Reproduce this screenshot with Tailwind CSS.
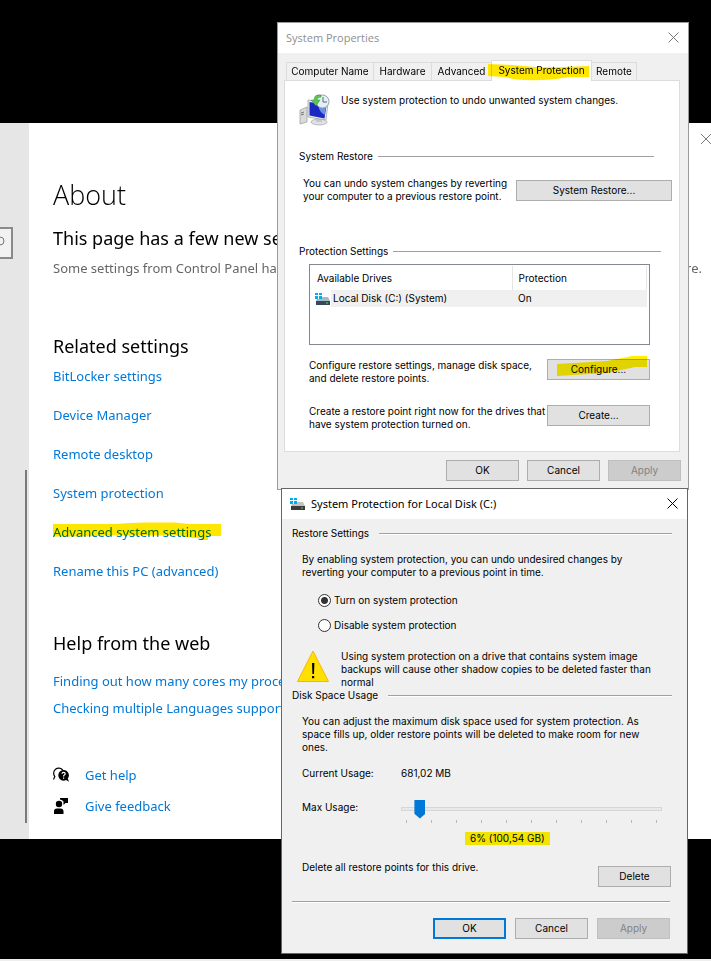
<!DOCTYPE html>
<html lang="en">
<head>
  <meta charset="UTF-8" />
  <meta name="viewport" content="width=device-width, initial-scale=1" />
  <title>System Protection</title>
  <script src="https://cdn.jsdelivr.net/npm/@tailwindcss/browser@4"></script>
</head>
<body class="relative flex min-h-screen flex-col overflow-x-hidden border-b-2 border-[#eeeeee] bg-black text-black">

  <!-- Settings window -->
  <main class="mt-[123px] flex overflow-hidden bg-white font-['Noto_Sans',sans-serif] text-[13px] leading-5">
    <aside class="relative w-[29px] shrink-0 bg-[#e6e6e6]">
      <label class="relative mt-[104px] block w-[13px]">
        <input type="search" aria-label="Find a setting" class="block h-8 w-full border-2 border-l-0 border-[#8a8a8a] bg-[#f2f2f2]" />
        <svg class="absolute top-2 left-0" width="8" height="14" viewBox="0 0 8 14" fill="none" stroke="#777"><circle cx="0" cy="6" r="4" /></svg>
      </label>
      <div class="absolute right-[2px] bottom-4 h-[353px] w-[2px] bg-[#7a7a7a]"></div>
    </aside>

    <div class="relative min-w-0 flex-1 pt-[54px] pr-[9px] pb-[23px] pl-6">
      <button type="button" aria-label="Close settings" class="absolute top-[10px] right-0">
        <svg width="11" height="12" viewBox="0 0 11 12" fill="none" stroke="#777"><path d="M1 1l10 10M11 1L1 11" /></svg>
      </button>

      <h1 class="font-['Open_Sans','Noto_Sans',sans-serif] text-[27px] leading-9 font-light">About</h1>
      <h2 class="mt-[11px] text-lg leading-7 whitespace-nowrap">This page has a few new settings</h2>
      <p class="mt-[6px] flex justify-between whitespace-nowrap text-[#666666]">
        <span>Some settings from Control Panel have</span>
        <span>re.</span>
      </p>

      <h2 class="mt-[54px] text-lg leading-7">Related settings</h2>
      <nav class="mt-[6px] flex flex-col items-start gap-[19px] text-[#0078d7]">
        <a href="#">BitLocker settings</a>
        <a href="#">Device Manager</a>
        <a href="#">Remote desktop</a>
        <a href="#">System protection</a>
        <a href="#" class="relative">Advanced system settings
          <svg class="absolute -top-[3px] left-0 mix-blend-multiply" width="169" height="24" viewBox="0 0 169 24"><path d="M0 5H62Q82 3 100 3.5H122L136 5H168V17H155V21H148V19H140L124 16.500H60L30 17.500H0Z" fill="#ffe600" /></svg>
        </a>
        <a href="#">Rename this PC (advanced)</a>
      </nav>

      <h2 class="mt-12 text-lg leading-7">Help from the web</h2>
      <nav class="mt-[14px] flex flex-col items-start gap-[7px] whitespace-nowrap text-[#0078d7]">
        <a href="#">Finding out how many cores my processor has</a>
        <a href="#">Checking multiple Languages supported</a>
      </nav>

      <nav class="mt-[47px] flex flex-col items-start gap-[11px] text-[#0078d7]">
        <a href="#" class="flex items-center gap-4">
          <svg width="16" height="16" viewBox="0 0 16 16">
            <path d="M.5 12.500l1.300-3A4.800 4.800 0 1 1 9.800 3" fill="none" stroke="#000" stroke-width="1.200" />
            <path d="M10.500 3a5.300 5.300 0 1 0 2.600 10l2.900 1.700-1.200-3.200A5.300 5.300 0 0 0 10.500 3z" />
            <path d="M9 6.800q0-1.500 1.600-1.500t1.600 1.400q0 .9-.9 1.400-.7.400-.7 1.300M10.600 10.600v1.200" fill="none" stroke="#fff" stroke-width="1.200" />
          </svg>
          Get help
        </a>
        <a href="#" class="flex items-center gap-4">
          <svg width="16" height="16" viewBox="0 0 16 16">
            <circle cx="6" cy="6" r="3.200" />
            <path d="M1 16v-2.500Q1 10.500 4 10.500h3.500q3 0 3 3V16zM7 0h8v5h-2.500L10.500 7V3.500Q9.500 1.800 7 1.500z" />
          </svg>
          Give feedback
        </a>
      </nav>
    </div>
  </main>

  <!-- System Properties dialog -->
  <section class="absolute top-[22px] left-[277px] w-[412px] border border-[#9a9a9a] bg-[#f0f0f0] font-['Inter','Liberation_Sans',sans-serif] text-[10px] leading-[13px] whitespace-nowrap">
    <header class="flex h-[30px] items-center justify-between bg-white pr-[9px] pb-px pl-2">
      <h2 class="font-['Open_Sans','Noto_Sans',sans-serif] text-[11px] text-[#8f8f8f]">System Properties</h2>
      <button type="button" aria-label="Close System Properties">
        <svg width="11" height="11" viewBox="0 0 11 11" fill="none" stroke="#777"><path d="M.5.5l10 10M10.500.5l-10 10" /></svg>
      </button>
    </header>

    <div class="px-[6px] pt-[7px] pb-2">
      <div role="tablist" class="relative z-10 -mb-px flex items-end pl-[2px]">
        <button type="button" role="tab" class="h-[19px] w-[88px] border border-[#dcdcdc]">Computer Name</button>
        <button type="button" role="tab" class="-ml-px h-[19px] w-[59px] border border-[#dcdcdc]">Hardware</button>
        <button type="button" role="tab" class="-ml-px h-[19px] w-[61px] border border-[#dcdcdc]">Advanced</button>
        <button type="button" role="tab" aria-selected="true" class="relative -ml-px h-[21px] w-[101px] border border-b-0 border-[#dcdcdc] bg-white pb-[2px]">System Protection
          <svg class="absolute top-[2px] -left-1 mix-blend-multiply" width="102" height="18" viewBox="0 0 102 18"><path d="M0 1L25 2Q50 5 75 4L101 3V14H80Q55 19 28 16.500L16 14L0 13Z" fill="#ffe600" /></svg>
        </button>
        <button type="button" role="tab" class="-ml-px h-[19px] w-[46px] border border-[#dcdcdc]">Remote</button>
      </div>

      <div role="tabpanel" class="mr-[2px] border border-[#dcdcdc] bg-white pt-[13px] pr-[7px] pb-5 pl-[14px]">
        <div class="flex gap-[10px]">
          <svg width="32" height="32" viewBox="0 0 32 32">
            <path d="M1 16l7-3v15l-7 2z" fill="#d8dadb" stroke="#999" stroke-width=".7" />
            <path d="M2 19l3-1M2 21l3-1" stroke="#777" />
            <ellipse cx="20" cy="28" rx="8" ry="3" fill="#dfe2e3" stroke="#999" stroke-width=".6" />
            <path d="M17 24h6v4h-6z" fill="#c4c8ca" />
            <path d="M9 6l20 3-2 17-18-3z" fill="#e9edef" stroke="#999" stroke-width=".7" />
            <path d="M10.500 8l17 3-2 13.500-15-3z" fill="#1a28c4" />
            <path d="M19 10l8.500 1-2 10Q20 18 19 10z" fill="#6f8fe6" />
            <circle cx="23.500" cy="7.500" r="6.500" fill="#e3f0f6" stroke="#98a9b2" />
            <path d="M24 3v5h4" fill="none" stroke="#667" />
            <path d="M22 1Q15 0 15 6h-3l5 6 4-6h-3Q18 3 22 3z" fill="#5cc556" stroke="#218724" stroke-width=".4" />
          </svg>
          <p>Use system protection to undo unwanted system changes.</p>
        </div>

        <div class="mt-6 flex items-center gap-[5px] pr-[18px]">
          <h3>System Restore</h3>
          <div class="h-px flex-1 bg-[#a0a0a0]"></div>
        </div>
        <div class="mt-[14px] flex items-center justify-between pl-1">
          <p>You can undo system changes by reverting<br />your computer to a previous restore point.</p>
          <button type="button" class="h-[21px] w-[156px] shrink-0 border border-[#adadad] bg-[#e1e1e1]">System Restore...</button>
        </div>

        <div class="mt-[42px] flex items-center gap-[5px] pr-[11px]">
          <h3>Protection Settings</h3>
          <div class="h-px flex-1 bg-[#a0a0a0]"></div>
        </div>
        <div class="mt-[6px] mr-[22px] ml-[10px]">
          <div class="h-[81px] border border-[#828790] px-[2px] pt-px">
            <table class="w-full table-fixed text-left">
              <thead>
                <tr class="h-6">
                  <th class="w-[200px] border-r border-[#e5e5e5] pl-[5px] font-normal">Available Drives</th>
                  <th class="border-r border-[#e5e5e5] pl-[6px] font-normal">Protection</th>
                </tr>
              </thead>
              <tbody>
                <tr class="h-[17px]">
                  <td class="bg-[linear-gradient(to_right,white_19px,#f0f0f0_19px)]">
                    <div class="flex items-center gap-[3px] pl-[3px]">
                      <svg width="15" height="14" viewBox="0 0 15 14">
                        <path d="M0 1h3v2H0zM4 1h3v2H4zM0 4h3v3H0zM4 4h3v3H4z" fill="#00adef" />
                        <path d="M7 5h6l2 4H1l1-2h5z" fill="#a8bac5" />
                        <path d="M1 9h14v4H1z" fill="#34495a" />
                        <path d="M11 10.500h2v1h-2z" fill="#3fe35a" />
                      </svg>
                      <span>Local Disk (C:) (System)</span>
                    </div>
                  </td>
                  <td class="bg-[#f0f0f0] pl-[6px]">On</td>
                </tr>
              </tbody>
            </table>
          </div>

          <div class="mt-[14px] flex items-start justify-between">
            <p>Configure restore settings, manage disk space,<br />and delete restore points.</p>
            <button type="button" class="relative h-[21px] w-[103px] shrink-0 border border-[#adadad] bg-[#e1e1e1]">Configure...
              <svg class="absolute -top-[5px] left-[9px] mix-blend-multiply" width="91" height="22" viewBox="0 0 91 22"><path d="M0 9L50 6L75 1H90V12H78L50 18L0 21Z" fill="#fff000" /></svg>
            </button>
          </div>
          <div class="mt-5 flex items-start justify-between">
            <p>Create a restore point right now for the drives that<br />have system protection turned on.</p>
            <button type="button" class="h-[21px] w-[103px] shrink-0 border border-[#adadad] bg-[#e1e1e1]">Create...</button>
          </div>
        </div>
      </div>

      <div class="mt-2 mr-px flex justify-end gap-2">
        <button type="button" class="h-[21px] w-[73px] border border-[#adadad] bg-[#e1e1e1]">OK</button>
        <button type="button" class="h-[21px] w-[73px] border border-[#adadad] bg-[#e1e1e1]">Cancel</button>
        <button type="button" disabled class="h-[21px] w-[73px] border border-[#bfbfbf] bg-[#cccccc] text-[#838383]">Apply</button>
      </div>
    </div>
  </section>

  <!-- System Protection for Local Disk dialog -->
  <section class="absolute top-[488px] left-[281px] w-[407px] border border-[#666666] bg-[#f0f0f0] font-['Inter','Liberation_Sans',sans-serif] text-[10px] leading-[13px] whitespace-nowrap">
    <header class="flex h-[30px] items-center gap-[6px] bg-white pr-[9px] pb-px pl-2">
      <svg width="15" height="14" viewBox="0 0 15 14">
        <path d="M0 1h3v2H0zM4 1h3v2H4zM0 4h3v3H0zM4 4h3v3H4z" fill="#00adef" />
        <path d="M7 5h6l2 4H1l1-2h5z" fill="#c2c2c2" />
        <path d="M1 9h14v4H1z" fill="#3b3b3b" />
        <path d="M11 10.500h2v1h-2z" fill="#3fe35a" />
      </svg>
      <h2 class="flex-1 font-['Noto_Sans',sans-serif] text-[11px]">System Protection for Local Disk (C:)</h2>
      <button type="button" aria-label="Close System Protection">
        <svg width="11" height="11" viewBox="0 0 11 11" fill="none" stroke="#000"><path d="M.5.5l10 10M10.500.5l-10 10" /></svg>
      </button>
    </header>

    <div class="pt-2 pr-[15px] pb-[14px] pl-[10px]">
      <div class="flex items-center gap-[10px]">
        <h3>Restore Settings</h3>
        <div class="h-[2px] flex-1 border-t border-[#a0a0a0] bg-white"></div>
      </div>
      <p class="mt-[13px] pl-[10px]">By enabling system protection, you can undo undesired changes by<br />reverting your computer to a previous point in time.</p>

      <div class="mt-[15px] flex flex-col items-start gap-3 pl-[26px]">
        <label class="flex items-center gap-[3px]">
          <input type="radio" name="protection" checked class="size-[13px] appearance-none rounded-full border border-[#333333] bg-white checked:bg-[radial-gradient(circle,#333333_3px,white_4px)]" />
          Turn on system protection
        </label>
        <label class="flex items-center gap-[3px]">
          <input type="radio" name="protection" class="size-[13px] appearance-none rounded-full border border-[#333333] bg-white checked:bg-[radial-gradient(circle,#333333_3px,white_4px)]" />
          Disable system protection
        </label>
      </div>

      <div class="mt-[18px] flex gap-3 pl-[5px]">
        <svg class="shrink-0" width="32" height="32" viewBox="0 0 32 32">
          <path d="M16 1L31.500 31.500H.5z" fill="#ffe000" stroke="#fbb500" />
          <path d="M15 13h2.400l-.4 11h-1.600zM15 26h2.200v2.200H15z" />
        </svg>
        <p>Using system protection on a drive that contains system image<br />backups will cause other shadow copies to be deleted faster than<br />normal</p>
      </div>

      <div class="flex items-center gap-[10px]">
        <h3>Disk Space Usage</h3>
        <div class="h-[2px] flex-1 border-t border-[#a0a0a0] bg-white"></div>
      </div>
      <p class="mt-[13px] pl-[10px]">You can adjust the maximum disk space used for system protection. As<br />space fills up, older restore points will be deleted to make room for new<br />ones.</p>

      <div class="mt-[13px] flex pl-[10px]">
        <span class="w-[99px]">Current Usage:</span>
        <span>681,02 MB</span>
      </div>

      <div class="mt-[19px] flex pr-[10px] pl-[10px]">
        <label for="max-usage" class="w-[99px] pt-[2px]">Max Usage:</label>
        <div class="flex-1">
          <input id="max-usage" type="range" min="0" max="100" value="5" class="block h-[19px] w-full appearance-none bg-transparent [&::-webkit-slider-runnable-track]:h-1 [&::-webkit-slider-runnable-track]:border [&::-webkit-slider-runnable-track]:border-[#d6d6d6] [&::-webkit-slider-runnable-track]:bg-[#e7eaea] [&::-webkit-slider-thumb]:-mt-2 [&::-webkit-slider-thumb]:h-[19px] [&::-webkit-slider-thumb]:w-[11px] [&::-webkit-slider-thumb]:appearance-none [&::-webkit-slider-thumb]:bg-[#0078d7] [&::-webkit-slider-thumb]:[clip-path:polygon(0_0,100%_0,100%_75%,50%_100%,0_75%)]" />
          <div id="ticks" class="mt-[2px] flex justify-between pr-[5px] pl-[5px]"></div>
        </div>
      </div>
      <div class="mt-[9px] flex pl-[173px]">
        <output for="max-usage" class="bg-[#f0e400] pr-[5px] pl-[5px]">6% (100,54 GB)</output>
      </div>

      <div class="mt-4 flex items-start justify-between pr-px pl-[10px]">
        <p>Delete all restore points for this drive.</p>
        <button type="button" class="mt-[5px] h-[21px] w-[73px] border border-[#adadad] bg-[#e1e1e1]">Delete</button>
      </div>

      <div class="mt-[14px] mr-[2px] h-[2px] border-t border-[#a0a0a0] bg-white"></div>
      <div class="mt-[15px] mr-[2px] flex justify-end gap-[9px]">
        <button type="button" class="h-[21px] w-[73px] border-2 border-[#0078d7] bg-[#e1e1e1]">OK</button>
        <button type="button" class="h-[21px] w-[73px] border border-[#adadad] bg-[#e1e1e1]">Cancel</button>
        <button type="button" disabled class="h-[21px] w-[73px] border border-[#bfbfbf] bg-[#cccccc] text-[#838383]">Apply</button>
      </div>
    </div>
  </section>

  <script>
    // Tick marks under the slider, one for each 10%
    const ticks = document.getElementById("ticks");
    for (let i = 0; i <= 10; i++) {
      const tick = document.createElement("span");
      tick.className = "h-[3px] w-px bg-[#b8b8b8]";
      ticks.appendChild(tick);
    }
  </script>
</body>
</html>
